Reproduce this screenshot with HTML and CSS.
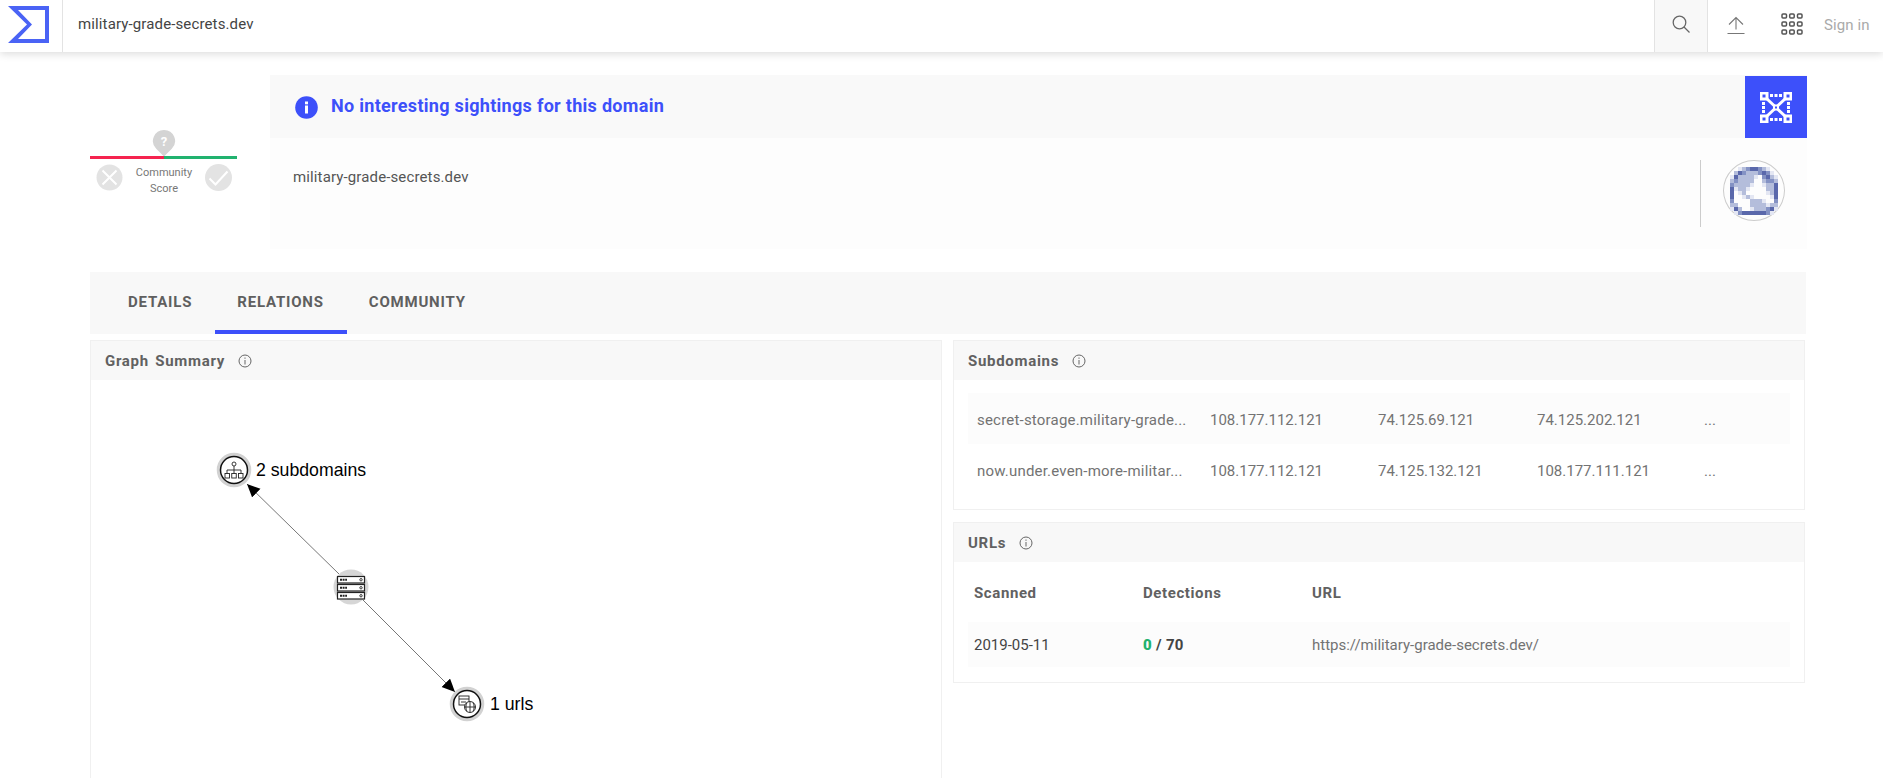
FILE: index.html
```html
<!DOCTYPE html>
<html lang="en">
<head>
  <meta charset="UTF-8">
  <title>military-grade-secrets.dev</title>
  <link rel="stylesheet" href="styles.css">
</head>
<body>
  <header class="topbar">
    <div class="logo">
      <svg width="62" height="52" viewBox="0 0 62 52"><path fill="#4a63f5" fill-rule="evenodd" d="M8 6H49V43H8L27 24.500ZM18 10L32 24.500 18 39H45V10Z"/></svg>
    </div>
    <div class="search-text">military-grade-secrets.dev</div>
    <div class="top-btn search-btn">
      <svg width="20" height="20" viewBox="0 0 20 20" fill="none" stroke="#666" stroke-width="1.3"><circle cx="8.500" cy="8.500" r="6.300"/><path d="M13 13l5.500 5.500"/></svg>
    </div>
    <div class="top-btn upload-btn">
      <svg width="20" height="20" viewBox="0 0 20 20" fill="none" stroke="#777" stroke-width="1.1"><path d="M10 14.500V2.500M3 9.500L10 2.500l7 7M1.500 18.500h17"/></svg>
    </div>
    <div class="top-btn apps-btn">
      <svg width="22" height="22" viewBox="0 0 22 22" fill="none" stroke="#555" stroke-width="1.500">
        <rect x="1" y="1" width="4.500" height="4" rx="1"/><rect x="8.700" y="1" width="4.500" height="4" rx="1"/><rect x="16.500" y="1" width="4.500" height="4" rx="1"/>
        <rect x="1" y="9" width="4.500" height="4" rx="1"/><rect x="8.700" y="9" width="4.500" height="4" rx="1"/><rect x="16.500" y="9" width="4.500" height="4" rx="1"/>
        <rect x="1" y="17" width="4.500" height="4" rx="1"/><rect x="8.700" y="17" width="4.500" height="4" rx="1"/><rect x="16.500" y="17" width="4.500" height="4" rx="1"/>
      </svg>
    </div>
    <a class="signin">Sign in</a>
  </header>

  <main class="content">
    <section class="summary">
      <div class="score">
        <svg class="score-pin" width="24" height="27" viewBox="0 0 24 27">
          <path fill="#d4d4d4" d="M12 0a11 11 0 0 1 7.800 18.800L12 26.500 4.200 18.800A11 11 0 0 1 12 0Z"/>
          <text x="12" y="16" class="pin-mark">?</text>
        </svg>
        <div class="score-bar"><span class="bar-red"></span><span class="bar-green"></span></div>
        <div class="score-row">
          <svg width="27" height="27" viewBox="0 0 27 27"><circle cx="13.500" cy="13.500" r="13" fill="#e3e3e3"/><path d="M6.500 6.500l14 14M20.500 6.500l-14 14" stroke="#fff" stroke-width="2" fill="none"/></svg>
          <div class="score-label">Community<br>Score</div>
          <svg width="27" height="27" viewBox="0 0 27 27"><circle cx="13.500" cy="13.500" r="13.500" fill="#e3e3e3"/><path d="M4.500 14.500l6 6L22.500 7.500" stroke="#fff" stroke-width="2" fill="none"/></svg>
        </div>
      </div>
      <div class="card">
        <div class="card-top">
          <svg class="notice-icon" width="23" height="23" viewBox="0 0 23 23"><circle cx="11.500" cy="11.500" r="11.300" fill="#3d50fa"/><rect x="10" y="9.500" width="3" height="8" fill="#fff"/><rect x="10" y="5.500" width="3" height="2.800" fill="#fff"/></svg>
          <span class="notice">No interesting sightings for this domain</span>
          <div class="graph-btn">
            <svg width="32" height="31" viewBox="0 0 32 31">
              <path stroke="#fff" stroke-width="3" d="M6 6l8.500 8M26 6l-8.500 8M6 25l8.500-8M26 25l-8.500-8"/>
              <path fill="#fff" fill-rule="evenodd" d="M0 0h8.500v8.500H0ZM2.500 2.500v3h3v-3ZM23.500 0h8.500v8.500h-8.500ZM26.500 2.500v3h3v-3ZM0 22.500h8.500V31H0ZM2.500 25.500v3h3v-3ZM23.500 22.500h8.500V31h-8.500ZM26.500 25.500v3h3v-3ZM13 12.500h6v6h-6ZM15 14.500v2h2v-2Z"/>
              <path fill="#fff" d="M10 2h3v3h-3ZM14.500 2h3v3h-3ZM19 2h3v3h-3ZM10 26h3v3h-3ZM14.500 26h3v3h-3ZM19 26h3v3h-3ZM2 10h3v3H2ZM2 14h3v3H2ZM2 18h3v3H2ZM27 10h3v3h-3ZM27 14h3v3h-3ZM27 18h3v3h-3Z"/>
            </svg>
          </div>
        </div>
        <div class="card-body">
          <div class="domain-name">military-grade-secrets.dev</div>
          <div class="domain-icon">
            <div class="globe-ring">
              <svg width="48" height="48" viewBox="0 0 48 48" fill="none" stroke-width="4" shape-rendering="crispEdges">
                <path stroke="#e4e7f3" d="M8 2h4M36 2h4M40 6h4M0 10h4M24 10h4M44 10h4M20 18h4M32 18h4M4 22h4M16 22h4M8 26h4M36 26h4M12 30h4M20 30h4M40 30h4M32 34h4M36 38h4M0 42h4M20 42h4M44 42h4M4 46h4M40 46h4"/>
                <path stroke="#b4bddb" d="M12 2h4M32 2h4M4 6h4M16 6h12M8 10h16M40 10h4M0 14h4M8 14h16M32 14h4M44 14h4M4 18h16M36 18h8M8 22h8M36 22h8M12 26h4M40 26h4M16 30h4M20 34h12M0 38h8M20 38h16M40 38h8M8 42h4M24 42h12"/>
                <path stroke="#8492c4" d="M16 2h4M28 2h4M12 6h4M28 6h4M36 6h4M32 10h4M4 14h4M36 14h8M0 18h4M0 34h4M44 34h4M36 42h4M8 46h4M36 46h4"/>
                <path stroke="#5a68ab" d="M20 2h8M8 6h4M32 6h4M4 10h4M36 10h4M44 18h4M0 22h4M44 22h4M0 26h4M44 26h4M0 30h4M44 30h4M4 42h4M40 42h4M12 46h24"/>
              </svg>
            </div>
          </div>
        </div>
      </div>
    </section>

    <nav class="tabs">
      <a class="tab">Details</a>
      <a class="tab active">Relations</a>
      <a class="tab">Community</a>
    </nav>

    <section class="panels">
      <div class="panel graph-panel">
        <div class="panel-head">
          <span>Graph Summary</span>
          <svg class="info" width="14" height="14" viewBox="0 0 14 14" fill="none" stroke="#666"><circle cx="7" cy="7" r="6"/><path d="M7 6v4.500M7 3.500v1.300"/></svg>
        </div>
        <svg class="graph" width="850" height="398" viewBox="91 380 850 398">
          <defs>
            <marker id="arrow" markerUnits="userSpaceOnUse" markerWidth="14" markerHeight="14" refX="13" refY="6" orient="auto"><path d="M0 0L13 6 0 12Z" fill="#000"/></marker>
          </defs>
          <path d="M339 574L247 484" class="edge" marker-end="url(#arrow)"/>
          <path d="M363 600L455 692" class="edge" marker-end="url(#arrow)"/>

          <circle cx="234" cy="470" r="15.500" class="halo"/>
          <circle cx="234" cy="470" r="13.500" class="node"/>
          <g class="glyph">
            <circle cx="234" cy="464" r="2"/>
            <path d="M234 466v4M227 473.500v-3.500h14v3.500M234 470v3.500"/>
            <rect x="225" y="473.500" width="4.500" height="4.500"/><rect x="231.750" y="473.500" width="4.500" height="4.500"/><rect x="238.500" y="473.500" width="4.500" height="4.500"/>
          </g>
          <text x="256" y="476" class="label">2 subdomains</text>

          <circle cx="351" cy="587" r="17.500" fill="#d6d6d6"/>
          <g class="rack">
            <rect x="337.500" y="576.500" width="27" height="6.500"/><rect x="337.500" y="584.500" width="27" height="6.500"/><rect x="337.500" y="592.500" width="27" height="6.500"/>
            <path class="rack-dots" d="M340 579.750h7M340 587.750h7M340 595.750h7"/>
            <circle cx="361" cy="579.750" r="1.200"/><circle cx="361" cy="587.750" r="1.200"/><circle cx="361" cy="595.750" r="1.200"/>
          </g>

          <circle cx="467" cy="704" r="15.500" class="halo"/>
          <circle cx="467" cy="704" r="13.500" class="node"/>
          <g class="glyph">
            <rect x="459" y="696" width="10" height="9" fill="#fff"/>
            <path d="M459 699h10M461 702h5"/>
            <circle cx="470" cy="707" r="5.500" fill="#fff"/>
            <path d="M464.500 707h11M470 701.500v11M467 702.500c-1.500 3-1.500 6 0 9M473 702.500c1.500 3 1.500 6 0 9"/>
          </g>
          <text x="490" y="710" class="label">1 urls</text>
        </svg>
      </div>

      <div class="side">
        <div class="panel">
          <div class="panel-head">
            <span>Subdomains</span>
            <svg class="info" width="14" height="14" viewBox="0 0 14 14" fill="none" stroke="#666"><circle cx="7" cy="7" r="6"/><path d="M7 6v4.500M7 3.500v1.300"/></svg>
          </div>
          <div class="sub-list">
            <div class="sub-row shaded">
              <span class="sub-name">secret-storage.military-grade...</span>
              <span>108.177.112.121</span><span>74.125.69.121</span><span>74.125.202.121</span><span>...</span>
            </div>
            <div class="sub-row">
              <span class="sub-name">now.under.even-more-militar...</span>
              <span>108.177.112.121</span><span>74.125.132.121</span><span>108.177.111.121</span><span>...</span>
            </div>
          </div>
        </div>
        <div class="panel">
          <div class="panel-head">
            <span>URLs</span>
            <svg class="info" width="14" height="14" viewBox="0 0 14 14" fill="none" stroke="#666"><circle cx="7" cy="7" r="6"/><path d="M7 6v4.500M7 3.500v1.300"/></svg>
          </div>
          <div class="url-list">
            <div class="url-row url-heading"><span>Scanned</span><span>Detections</span><span>URL</span></div>
            <div class="url-row shaded">
              <span class="url-date">2019-05-11</span>
              <span class="detections"><b class="clean">0</b> / 70</span>
              <span>https://military-grade-secrets.dev/</span>
            </div>
          </div>
        </div>
      </div>
    </section>
  </main>
</body>
</html>
```

FILE: styles.css
```css
html, body {
  margin: 0;
  height: 778px;
  overflow: hidden;
}
body {
  font-family: Roboto, "Liberation Sans", sans-serif;
  font-size: 15px;
  color: #666;
  background: #fff;
}
.topbar {
  display: flex;
  align-items: stretch;
  height: 52px;
  background: #fff;
  box-shadow: 0 2px 8px rgba(0,0,0,0.14);
}
.logo {
  width: 62px;
  border-right: 1px solid #e3e3e3;
}
.logo svg {
  display: block;
}
.search-text {
  flex: 1;
  padding-left: 15px;
  line-height: 48px;
  letter-spacing: 0.13px;
  color: #444;
}
.top-btn {
  display: flex;
  align-items: center;
  justify-content: center;
}
.search-btn {
  width: 52px;
  background: #f8f8f8;
  border-left: 1px solid #e3e3e3;
  border-right: 1px solid #e3e3e3;
  padding-bottom: 4px;
}
.upload-btn {
  width: 56px;
  padding-bottom: 3px;
}
.apps-btn {
  width: 55px;
  padding-bottom: 4px;
}
.signin {
  width: 59px;
  padding-left: 5px;
  line-height: 50px;
  font-size: 15px;
  letter-spacing: 0.1px;
  color: #aaa;
}

.content {
  width: 1716px;
  margin-left: 90px;
}
.summary {
  display: flex;
  margin-top: 23px;
}
.score {
  width: 148px;
  margin-right: 32px;
  padding-top: 55px;
  display: flex;
  flex-direction: column;
  align-items: center;
}
.score-pin {
  display: block;
  margin-left: -1px;
}
.pin-mark {
  font-size: 13px;
  font-weight: 700;
  text-anchor: middle;
  fill: #fff;
}
.score-bar {
  display: flex;
  width: 147px;
  height: 3px;
  margin-top: -1px;
  align-self: flex-start;
}
.bar-red, .bar-green {
  flex: 1;
}
.bar-red {
  background: #f5234f;
}
.bar-green {
  background: #21b26f;
}
.score-row {
  display: flex;
  justify-content: space-between;
  align-items: flex-start;
  width: 136px;
  margin-top: 5px;
  align-self: flex-start;
  margin-left: 6px;
}
.score-label {
  font-size: 11px;
  line-height: 16px;
  text-align: center;
  color: #777;
  margin-top: 1px;
}
.card {
  flex: 1;
  margin-right: -1px;
}
.card-top {
  display: flex;
  align-items: center;
  height: 63px;
  background: #f9f9f9;
  padding-left: 25px;
}
.notice-icon {
  margin-right: 13px;
  margin-top: 2px;
}
.notice {
  flex: 1;
  margin-top: -2px;
  font-size: 18px;
  font-weight: 700;
  letter-spacing: 0.3px;
  color: #3d50fa;
}
.graph-btn {
  display: flex;
  align-items: center;
  justify-content: center;
  width: 62px;
  height: 62px;
  margin-top: 1px;
  background: #3d50fa;
}
.card-body {
  display: flex;
  justify-content: space-between;
  height: 111px;
  background: #fdfdfd;
}
.domain-name {
  padding: 30px 0 0 23px;
  letter-spacing: 0.13px;
  color: #555;
}
.domain-icon {
  display: flex;
  height: 67px;
  margin-top: 22px;
  margin-right: 22px;
  padding-left: 22px;
  border-left: 1px solid #ccc;
}
.globe-ring {
  display: flex;
  align-items: center;
  justify-content: center;
  width: 62px;
  height: 61px;
  border: 1px solid #ccc;
  border-radius: 50%;
  box-sizing: border-box;
}
.globe-ring svg {
  display: block;
}

.tabs {
  display: flex;
  height: 62px;
  margin-top: 23px;
  padding-left: 16px;
  background: #f8f8f8;
}
.tab {
  box-sizing: border-box;
  height: 62px;
  padding: 0 23px 0 22px;
  line-height: 60px;
  font-size: 15px;
  font-weight: 700;
  letter-spacing: 0.8px;
  text-transform: uppercase;
  color: #5f5f5f;
}
.tab.active {
  border-bottom: 4px solid #3d50fa;
}

.panels {
  display: grid;
  grid-template-columns: 852px 852px;
  gap: 11px;
  margin-top: 6px;
}
.panel {
  box-sizing: border-box;
  border: 1px solid #f0f0f0;
  background: #fff;
}
.graph-panel {
  height: 440px;
}
.panel-head {
  display: flex;
  align-items: center;
  gap: 13px;
  height: 39px;
  padding-left: 14px;
  background: #f8f8f8;
  font-size: 15px;
  font-weight: 700;
  letter-spacing: 0.7px;
  word-spacing: 2px;
  color: #616161;
}
.info {
  display: block;
}
.graph {
  display: block;
}
.edge {
  stroke: #777;
  stroke-width: 1;
  fill: none;
}
.halo {
  fill: #fff;
  stroke: #d2d2d2;
  stroke-width: 3.5;
}
.node {
  fill: #fff;
  stroke: #111;
  stroke-width: 1.5;
}
.glyph {
  fill: none;
  stroke: #222;
  stroke-width: 0.9;
}
.rack rect {
  fill: #fff;
  stroke: #222;
  stroke-width: 1.2;
}
.rack circle {
  fill: none;
  stroke: #222;
  stroke-width: 0.9;
}
.rack-dots {
  stroke: #222;
  stroke-width: 2;
  stroke-dasharray: 2 0.6;
  fill: none;
}
.label {
  font-family: "Liberation Sans", Arial, sans-serif;
  font-size: 17.7px;
  fill: #000;
}

.side {
  display: flex;
  flex-direction: column;
  gap: 12px;
}
.sub-list {
  height: 116px;
  padding: 13px 14px 0;
}
.sub-row {
  display: grid;
  grid-template-columns: 233px 168px 159px 167px 1fr;
  align-items: center;
  box-sizing: border-box;
  height: 51px;
  padding: 2px 0 0 9px;
  color: #737373;
}
.sub-name {
  letter-spacing: 0.2px;
  white-space: nowrap;
}
.shaded {
  background: #fcfcfc;
}
.url-list {
  height: 120px;
  padding: 0 14px;
}
.url-row {
  display: grid;
  grid-template-columns: 169px 169px 1fr;
  align-items: center;
  height: 45px;
  padding-left: 6px;
  color: #737373;
}
.url-heading {
  box-sizing: border-box;
  height: 60px;
  padding-top: 2px;
  font-weight: 700;
  letter-spacing: 0.6px;
  color: #616161;
}
.url-date {
  color: #444;
}
.detections {
  font-weight: 700;
  letter-spacing: 0.3px;
  color: #444;
}
.clean {
  color: #21b26f;
}
```
